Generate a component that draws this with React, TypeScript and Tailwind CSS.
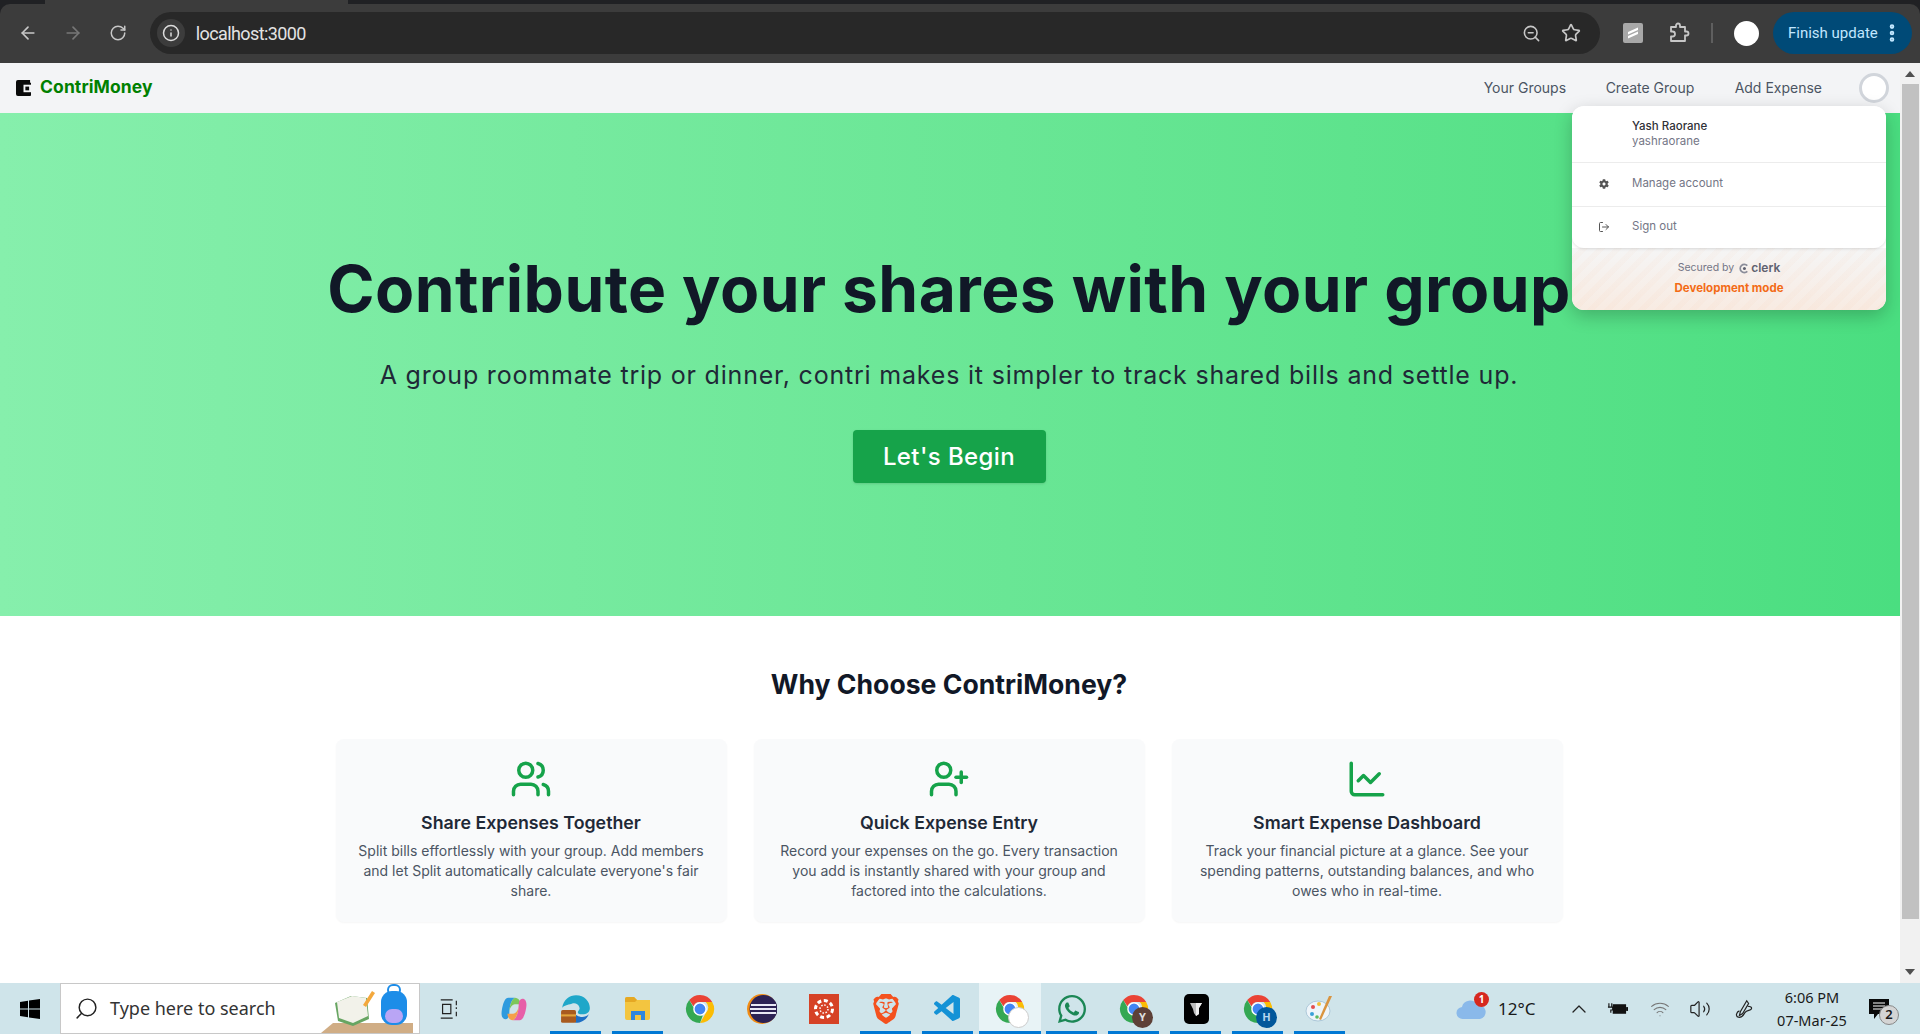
import { ArrowLeft, ArrowRight, ChartLine, ChevronUp, EllipsisVertical, Info, LogOut, RotateCw, Search, Star, UserPlus, Users, Volume2, Wifi, ZoomOut } from "lucide-react";
import { FaCog, FaWhatsapp } from "react-icons/fa";
import { SiBrave } from "react-icons/si";
import { VscVscode } from "react-icons/vsc";

const features = [
  {
    icon: Users,
    title: "Share Expenses Together",
    text: "Split bills effortlessly with your group. Add members and let Split automatically calculate everyone's fair share.",
  },
  {
    icon: UserPlus,
    title: "Quick Expense Entry",
    text: "Record your expenses on the go. Every transaction you add is instantly shared with your group and factored into the calculations.",
  },
  {
    icon: ChartLine,
    title: "Smart Expense Dashboard",
    text: "Track your financial picture at a glance. See your spending patterns, outstanding balances, and who owes who in real-time.",
  },
];

function ChromeIcon({ badge, badgeClass }: { badge?: string; badgeClass?: string }) {
  return (
    <div className="relative h-[30px] w-[30px]">
      <svg viewBox="0 0 32 32" className="h-[30px] w-[30px]">
        <path d="M16 1a15 15 0 0 1 13 7.500H16a7.500 7.500 0 0 0-7 4.600L4.500 6.500A15 15 0 0 1 16 1z" fill="#ea4335" />
        <path d="M29 8.500a15 15 0 0 1-13 22.500l6.500-11.200a7.500 7.500 0 0 0-.5-11.300z" fill="#fbbc04" />
        <path d="M16 31A15 15 0 0 1 4.500 6.500L11 17.500a7.500 7.500 0 0 0 8 5.500z" fill="#34a853" />
        <circle cx="16" cy="16" r="6.500" fill="#4285f4" stroke="#fff" strokeWidth="1.500" />
      </svg>
      {badge !== undefined && (
        <span className={`absolute -bottom-[4px] -right-[4px] flex h-[21px] w-[21px] items-center justify-center rounded-full text-[11px] font-bold ${badgeClass}`}>
          {badge}
        </span>
      )}
    </div>
  );
}

function TaskItem({ active, open, children }: { active?: boolean; open?: boolean; children: React.ReactNode }) {
  return (
    <div className={`relative flex h-full w-[62px] items-center justify-center ${active ? "bg-[#e8f3f6]" : ""}`}>
      {children}
      {open && <div className={`absolute bottom-0 h-[3px] bg-[#0078d4] ${active ? "inset-x-0" : "left-[5px] right-[6px]"}`} />}
    </div>
  );
}

function BrowserBar() {
  return (
    <div className="bg-[#202124]">
      <div className="h-[4px] flex">
        <div className="w-[45px] bg-[#202124]" />
        <div className="w-[303px] bg-[#3c3c3c]" />
      </div>
      <div className="flex h-[59px] items-start rounded-t-[10px] bg-[#3c3c3c] pr-2 pt-2 font-['Roboto',sans-serif]">
        <div className="flex h-[42px] w-[150px] items-center text-[#c7c7c7]">
          <ArrowLeft size={20} className="ml-[18px]" />
          <ArrowRight size={20} className="ml-[25px] text-[#777]" />
          <RotateCw size={18} className="ml-[26px]" />
        </div>
        <div className="flex h-[42px] w-[1452px] items-center rounded-full bg-[#282828] pl-[7px] pr-4">
          <div className="flex h-[28px] w-[28px] items-center justify-center rounded-full bg-[#3c3c3c]">
            <Info size={18} className="text-[#dcdcdc]" />
          </div>
          <span className="ml-[11px] flex-1 text-[18px] tracking-[-0.6px] text-[#e3e3e3]">localhost:3000</span>
          <ZoomOut size={19} className="mr-[20px] text-[#c7c7c7]" />
          <Star size={20} className="mr-[3px] text-[#c7c7c7]" />
        </div>
        <div className="flex h-[42px] flex-1 items-center">
          <div className="ml-[23px] flex h-[20px] w-[20px] items-center justify-center rounded-[2px] bg-[#a8a8a8]">
            <svg viewBox="0 0 20 20" className="h-[20px] w-[20px]">
              <path d="M5 9 15 4.500v2.500L5 11.500zM5 13l10-4.500V11L5 15.500z" fill="#fff" />
            </svg>
          </div>
          <svg viewBox="0 0 22 22" className="ml-[25px] h-[22px] w-[22px]" fill="none" stroke="#c7c7c7" strokeWidth="1.800" strokeLinejoin="round">
            <path d="M3 5h5V3.500a2 2 0 0 1 4 0V5h5v4.500h1.500a2 2 0 0 1 0 4H17V19H3v-4.500h1.500a2.500 2.500 0 0 0 0-5H3z" />
          </svg>
          <div className="ml-[21px] h-[20px] w-[2px] bg-[#5f5f5f]" />
          <div className="ml-[21px] h-[25px] w-[25px] rounded-full bg-white" />
          <div className="ml-[14px] flex h-[42px] w-[139px] items-center rounded-full bg-[#004a77] pl-[15px] text-[15px] text-[#c2e7ff]">
            Finish update
            <EllipsisVertical size={22} className="ml-[3px]" strokeWidth={3} />
          </div>
        </div>
      </div>
    </div>
  );
}

function AccountPopup() {
  return (
    <div className="absolute left-[1572px] top-[43px] w-[314px] overflow-hidden rounded-xl bg-white font-['Inter',sans-serif] shadow-[0_6px_18px_rgba(0,0,0,0.22)]">
      <div className="relative rounded-b-xl bg-white shadow-[0_1px_3px_rgba(0,0,0,0.12)]">
        <div className="h-[57px] border-b border-[#ececec] pl-[60px] pt-[13px] text-[11.500px] leading-[15px]">
          <p className="font-medium text-[#2f3037]">Yash Raorane</p>
          <p className="text-[#747686]">yashraorane</p>
        </div>
        <div className="flex h-[44px] items-center border-b border-[#ececec] pb-[2px] text-[11.500px] text-[#747686]">
          <FaCog size={10} className="ml-[27px] mr-[23px] text-[#555]" />
          Manage account
        </div>
        <div className="flex h-[41px] items-center pb-[2px] text-[11.500px] text-[#747686]">
          <LogOut size={12} className="ml-[26px] mr-[22px] text-[#555]" />
          Sign out
        </div>
      </div>
      <div className="flex h-[62px] flex-col items-center bg-[repeating-linear-gradient(135deg,rgba(243,107,22,0)_0,rgba(243,107,22,0)_6px,rgba(243,107,22,0.025)_6px,rgba(243,107,22,0.025)_12px),linear-gradient(to_bottom,#f5f5f5,#f8ebe2)] pt-[12px]">
        <div className="flex h-[16px] items-center gap-[5px] text-[10.500px] text-[#747686]">
          Secured by
          <span className="flex items-center gap-[2px] text-[12px] font-semibold text-[#5f6170]">
            <svg viewBox="0 0 12 12" className="h-[11px] w-[10px]">
              <path d="M10 2.500A5 5 0 1 0 10 9.500" fill="none" stroke="#8a8c99" strokeWidth="2" />
              <circle cx="6.500" cy="6" r="1.800" fill="#5f6170" />
            </svg>
            clerk
          </span>
        </div>
        <p className="mt-[4px] text-[11.500px] font-bold text-[#f36b16]">Development mode</p>
      </div>
    </div>
  );
}

function Page() {
  return (
    <div className="relative h-full flex-1 overflow-hidden font-['Inter',sans-serif]">
      <header className="flex h-[50px] items-center bg-[#f3f4f6] pl-[16px]">
        <svg viewBox="0 0 16 17" className="h-[16px] w-[15px]">
          <path d="M2 0h13v3h1v13a1 1 0 0 1-1 1H2a2 2 0 0 1-2-2V2a2 2 0 0 1 2-2z" fill="#0a0a0a" />
          <rect x="8" y="5" width="8" height="8" fill="#f3f4f6" />
          <rect x="10" y="7" width="4" height="4" fill="#0a0a0a" />
        </svg>
        <span className="mb-[2px] ml-[9px] flex-1 text-[17.500px] font-bold tracking-[0.1px] text-[#008000]">ContriMoney</span>
        <nav className="mb-[2px] flex items-center text-[14px] text-[#4b5563]">
          <span className="w-[122px]">Your Groups</span>
          <span className="w-[129px]">Create Group</span>
          <span>Add Expense</span>
        </nav>
        <div className="ml-[37px] mr-[11px] h-[30px] w-[30px] rounded-full border-[3px] border-[#d1d5db] bg-white" />
      </header>

      <section className="flex h-[503px] flex-col items-center bg-gradient-to-r from-[#86efac] to-[#4ade80] pr-[2px] pt-[140px]">
        <h1 className="text-[64px] font-bold leading-[72px] tracking-[0.45px] text-[#111827]">Contribute your shares with your group</h1>
        <p className="mt-[34px] text-[25px] leading-[32px] tracking-[0.8px] text-[#1f2937]">
          A group roommate trip or dinner, contri makes it simpler to track shared bills and settle up.
        </p>
        <button className="mt-[39px] flex h-[53px] w-[193px] items-center justify-center rounded bg-[#16a34a] text-[24px] font-medium tracking-[0.4px] text-white shadow">
          Let's Begin
        </button>
      </section>

      <section className="flex flex-col items-center bg-white pr-[2px]">
        <h2 className="mt-[50px] text-[26.600px] font-bold leading-[36px] text-[#111827]">Why Choose ContriMoney?</h2>
        <div className="mt-[37px] grid w-[1227px] grid-cols-3 gap-[27px]">
          {features.map((f) => (
            <div key={f.title} className="flex h-[183px] flex-col items-center rounded-lg bg-[#f9fafb] px-[20px] pt-[19px] text-center shadow-[0_1px_2px_rgba(0,0,0,0.04)]">
              <f.icon size={42} className="text-[#16a34a]" strokeWidth={2} />
              <h3 className="mt-[9px] text-[17.800px] font-semibold leading-[28px] text-[#1f2937]">{f.title}</h3>
              <p className="mt-[4px] text-[14px] leading-[20px] text-[#4b5563]">{f.text}</p>
            </div>
          ))}
        </div>
      </section>

      <AccountPopup />
    </div>
  );
}

function Scrollbar() {
  return (
    <div className="flex h-full w-[20px] flex-col items-center bg-[#f1f1f1]">
      <div className="mt-[8px] h-0 w-0 border-x-[5px] border-b-[6px] border-x-transparent border-b-[#505050]" />
      <div className="mt-[7px] h-[835px] w-[17px] bg-[#c1c1c1]" />
      <div className="mb-[8px] mt-auto h-0 w-0 border-x-[5px] border-t-[6px] border-x-transparent border-t-[#505050]" />
    </div>
  );
}

function Taskbar() {
  return (
    <footer className="flex h-[51px] items-center bg-[#cfe4ea] font-['Noto_Sans',sans-serif] text-[#1a1a1a]">
      <div className="flex h-full w-[60px] items-center justify-center">
        <svg viewBox="0 0 20 20" className="h-[20px] w-[20px]">
          <path d="M0 3l8-1.200V9.500H0zM9 1.600 20 0v9.500H9zM0 10.500h8v7.700L0 17zM9 10.500h11V20L9 18.400z" fill="#000" />
        </svg>
      </div>
      <div className="relative flex h-full w-[360px] items-center overflow-hidden border border-[#c8c8c8] bg-white pl-[13px]">
        <Search size={25} className="-scale-x-100 text-[#222]" strokeWidth={1.400} />
        <span className="ml-[11px] text-[18px] text-[#333]">Type here to search</span>
        <svg viewBox="0 0 100 50" className="absolute bottom-0 right-0 h-[50px] w-[100px]">
          <path d="M2 50 14 40h80v10z" fill="#d0ad85" />
          <path d="M16 20 32 13 48 15 50 36 34 43 19 38z" fill="#67a562" />
          <path d="M18 19 33 13 47 15 49 33 34 40 20 35z" fill="#f2f2ea" />
          <path d="M44 22 53 8 56 10 47 24z" fill="#f3a83c" />
          <rect x="62" y="8" width="26" height="34" rx="11" fill="#1d8de8" />
          <rect x="69" y="2" width="12" height="10" rx="5" fill="none" stroke="#1d8de8" strokeWidth="2" />
          <rect x="66" y="26" width="18" height="14" rx="7" fill="#b9a5f5" />
        </svg>
      </div>
      <div className="ml-[-2px] flex h-full items-center">
        <TaskItem>
          <svg viewBox="0 0 20 24" className="h-[22px] w-[20px]" fill="none" stroke="#222" strokeWidth="1.300">
            <path d="M1 2h13M1 22h13M3 7h9v10H3zM18 3v5M18 10v2M18 15v5" />
          </svg>
        </TaskItem>
        <div className="w-[3px]" />
        <TaskItem>
          <svg viewBox="0 0 30 30" className="h-[28px] w-[28px]">
            <path d="M9 3h7c-4 2-6 10-6 16 0 3-1 7-4 7-4 0-5-5-4-10 1-6 3-13 7-13z" fill="#2f9bde" />
            <path d="M10 19c0-6 2-14 6-16 4 0 6 4 6 7h-6c-3 0-6 4-6 9z" fill="#7cc75a" />
            <path d="M21 27h-7c4-2 6-10 6-16 0-3 1-7 4-7 4 0 5 5 4 10-1 6-3 13-7 13z" fill="#e75fa8" />
            <path d="M20 11c0 6-2 14-6 16-4 0-6-4-6-7h6c3 0 6-4 6-9z" fill="#f5a04a" />
          </svg>
        </TaskItem>
        <TaskItem open>
          <svg viewBox="0 0 30 30" className="h-[32px] w-[32px]">
            <path d="M2 14C3 6 9 2 15 2c8 0 13 6 13 12 0 4-3 6-7 6-3 0-5-1-4-3 1-1 2-2 1-4-1-3-4-4-7-3-4 1-8 2-9 4z" fill="#1fa7c9" />
            <path d="M15 28c5 0 10-3 12-8-3 3-8 3-11 1-2-1-3 0-3 2 0 3 1 5 2 5z" fill="#1e6fc4" />
            <rect x="1" y="16" width="14" height="12" rx="1.500" fill="#a85a1f" />
            <rect x="1" y="20" width="14" height="2" fill="#e2a33a" />
          </svg>
        </TaskItem>
        <TaskItem open>
          <svg viewBox="0 0 28 28" className="h-[28px] w-[28px]">
            <path d="M1 4a2 2 0 0 1 2-2h7l3 3h13v18a2 2 0 0 1-2 2H3a2 2 0 0 1-2-2z" fill="#f3c540" />
            <path d="M1 4a2 2 0 0 1 2-2h7l3 3-2 2H1z" fill="#e5a823" />
            <path d="M7 25v-9h14v9h-4v-5h-6v5z" fill="#2e86de" />
          </svg>
        </TaskItem>
        <TaskItem>
          <ChromeIcon />
        </TaskItem>
        <TaskItem>
          <svg viewBox="0 0 30 30" className="h-[30px] w-[30px]">
            <circle cx="15" cy="15" r="15" fill="#f28c13" />
            <circle cx="16.500" cy="15" r="14" fill="#2c2255" />
            <rect x="4" y="10" width="25" height="2" fill="#e8e8f5" />
            <rect x="3" y="14" width="26" height="2" fill="#e8e8f5" />
            <rect x="4" y="18" width="25" height="2" fill="#e8e8f5" />
          </svg>
        </TaskItem>
        <TaskItem>
          <div className="flex h-[30px] w-[30px] items-center justify-center bg-[#d64226]">
            <svg viewBox="0 0 24 24" className="h-[24px] w-[24px]" fill="none" stroke="#fff">
              <circle cx="12" cy="12" r="8.500" strokeWidth="3" strokeDasharray="4 2.600" />
              <circle cx="12" cy="12" r="4" strokeWidth="1.500" strokeDasharray="1.500 1.600" />
            </svg>
          </div>
        </TaskItem>
        <TaskItem open>
          <SiBrave size={30} className="text-[#f4511e]" />
        </TaskItem>
        <TaskItem open>
          <VscVscode size={32} className="text-[#1492d6]" />
        </TaskItem>
        <TaskItem active open>
          <ChromeIcon badge="" badgeClass="bg-white border border-[#ccc]" />
        </TaskItem>
        <TaskItem open>
          <FaWhatsapp size={32} className="text-[#1b8755]" />
        </TaskItem>
        <TaskItem open>
          <ChromeIcon badge="Y" badgeClass="bg-[#5d4037] text-[#ddd]" />
        </TaskItem>
        <TaskItem open>
          <div className="flex h-[30px] w-[25px] items-center justify-center rounded-[5px] bg-black">
            <svg viewBox="0 0 16 16" className="h-[16px] w-[16px]">
              <path d="M2 2h12l-3 5v6l-3 2-2-3-1-4z" fill="#bdbdbd" />
              <path d="M8 2h6l-3 5v6l-3 2z" fill="#eee" />
            </svg>
          </div>
        </TaskItem>
        <TaskItem open>
          <ChromeIcon badge="H" badgeClass="bg-[#01579b] text-[#b6d5ee]" />
        </TaskItem>
        <TaskItem open>
          <svg viewBox="0 0 30 30" className="h-[30px] w-[30px]">
            <ellipse cx="13" cy="17" rx="12" ry="10" fill="#eef5fa" stroke="#9fbed2" strokeWidth="0.800" />
            <circle cx="8" cy="13" r="2" fill="#e34f4f" />
            <circle cx="14" cy="10" r="2" fill="#f2c037" />
            <circle cx="7" cy="20" r="2" fill="#3aa1d8" />
            <circle cx="12" cy="23" r="1.800" fill="#5dbb63" />
            <path d="M27 2 16 26l-2-1L24 2z" fill="#d99440" />
          </svg>
        </TaskItem>
      </div>
      <div className="ml-auto flex h-full items-center">
        <div className="relative h-[24px] w-[32px]">
          <svg viewBox="0 0 32 24" className="h-[24px] w-[32px]">
            <path d="M7 22a6 6 0 0 1-1-12 8 8 0 0 1 15-2 7 7 0 0 1 3 14z" fill="#8ab9ea" />
          </svg>
          <span className="absolute -right-[1px] -top-[5px] flex h-[15px] w-[15px] items-center justify-center rounded-full bg-[#d6281f] text-[10px] font-bold text-white">1</span>
        </div>
        <span className="ml-[10px] w-[40px] text-[17px]">12°C</span>
        <ChevronUp size={24} className="ml-[29px] text-[#222]" strokeWidth={1.300} />
        <svg viewBox="0 0 22 14" className="ml-[16px] h-[14px] w-[21px]">
          <path d="M2 1v4M5 1v4M1 5h5v3H4v3" fill="none" stroke="#111" strokeWidth="1.200" />
          <rect x="6" y="2" width="14" height="10" fill="#111" />
          <rect x="20" y="5" width="2" height="4" fill="#111" />
        </svg>
        <Wifi size={20} className="ml-[22px] text-[#777]" strokeWidth={1.300} />
        <Volume2 size={22} className="ml-[19px] text-[#222]" strokeWidth={1.300} />
        <svg viewBox="0 0 24 24" className="ml-[22px] h-[22px] w-[22px]" fill="none" stroke="#222" strokeWidth="1.300">
          <path d="M15 3 8 15l-1 4 3.500-2L17 6z" />
          <path d="M16 9c3 0 5 1 4 3s-5 1-7 4-3 6-7 5-2-6 1-7" />
        </svg>
        <div className="ml-[22px] flex w-[70px] flex-col items-center text-[14.500px] leading-[23px]">
          <span>6:06 PM</span>
          <span>07-Mar-25</span>
        </div>
        <div className="relative ml-[22px] mr-[30px] h-[24px] w-[21px]">
          <svg viewBox="0 0 21 24" className="h-[24px] w-[21px]">
            <path d="M0 2h20v15H9l-4 5v-5H0z" fill="#0a0a0a" />
            <path d="M4 6h12M4 9h12M4 12h9" stroke="#fff" strokeWidth="1" />
          </svg>
          <span className="absolute -bottom-[4px] -right-[9px] flex h-[20px] w-[20px] items-center justify-center rounded-full border border-[#888] bg-[#d4d4d4] text-[13px] font-semibold">2</span>
        </div>
      </div>
    </footer>
  );
}

export default function App() {
  return (
    <div className="flex h-[1034px] w-[1920px] flex-col overflow-hidden bg-white">
      <BrowserBar />
      <div className="flex h-[920px]">
        <Page />
        <Scrollbar />
      </div>
      <Taskbar />
    </div>
  );
}
